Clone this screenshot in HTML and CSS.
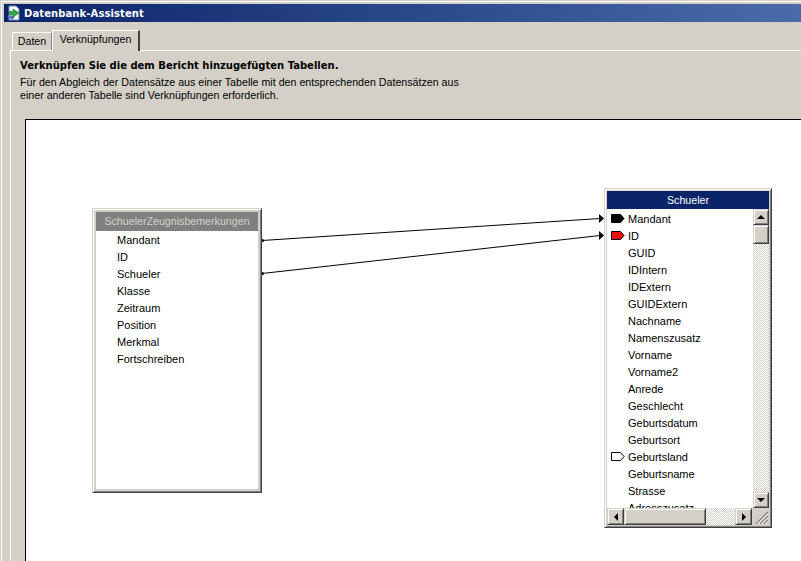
FILE: index.html
```html
<!DOCTYPE html>
<html>
    <head>
        <meta charset="utf-8">
        <title>Datenbank-Assistent</title>
        <link rel="stylesheet" href="styles.css">
    </head>
    <body>
        <div class="window">
            <div class="titlebar">
                <svg class="appicon" width="16" height="18" viewBox="0 0 16 18">
                    <path d="M3 2h7l3 3v11H3z" fill="#f4f6fa" stroke="#7f8fb0"/>
                    <path d="M1 13l5 3 3-3-4-2z" fill="#5b78b8"/>
                    <path d="M7 5l6 4-6 4v-2.500H3v-3h4z" fill="#2fa84a" stroke="#14702c" stroke-width=".6"/>
                </svg>
                <span>Datenbank-Assistent</span>
            </div>
            <div class="tabs">
                <div class="tab">Daten</div>
                <div class="tab active">Verknüpfungen</div>
            </div>
            <div class="panel">
                <div class="intro">
                    <h1>Verknüpfen Sie die dem Bericht hinzugefügten Tabellen.</h1>
                    <p>Für den Abgleich der Datensätze aus einer Tabelle mit den entsprechenden Datensätzen aus<br>einer anderen Tabelle sind Verknüpfungen erforderlich.</p>
                </div>
                <div class="canvas">
                    <svg class="links" width="776" height="441" viewBox="0 0 776 441">
                        <path d="M236 120.500L574 98.500M236 153.500L574 115.500" stroke="#000" fill="none"/>
                        <path d="M573 94l5 4.500-5 4.500zM573 111l5 4.500-5 4.500z" fill="#000"/>
                        <circle cx="236.500" cy="120.500" r="1.500" fill="#000"/>
                        <circle cx="236.500" cy="153.500" r="1.500" fill="#000"/>
                    </svg>

                    <div class="dbtable left-table">
                        <div class="dbhead inactive">SchuelerZeugnisbemerkungen</div>
                        <div class="fields plain">
                            <div class="field">Mandant</div>
                            <div class="field">ID</div>
                            <div class="field">Schueler</div>
                            <div class="field">Klasse</div>
                            <div class="field">Zeitraum</div>
                            <div class="field">Position</div>
                            <div class="field">Merkmal</div>
                            <div class="field">Fortschreiben</div>
                        </div>
                    </div>

                    <div class="dbtable right-table">
                        <div class="dbhead">Schueler</div>
                        <div class="listarea">
                            <div class="fields keyed">
                                <div class="field"><svg class="key" width="15" height="11" viewBox="0 0 15 11"><path d="M1.500 1.500h9l3.500 4-3.500 4h-9z" fill="#000" stroke="#000"/></svg>Mandant</div>
                                <div class="field"><svg class="key" width="15" height="11" viewBox="0 0 15 11"><path d="M1.500 1.500h9l3.500 4-3.500 4h-9z" fill="#f00f0f" stroke="#000"/></svg>ID</div>
                                <div class="field">GUID</div>
                                <div class="field">IDIntern</div>
                                <div class="field">IDExtern</div>
                                <div class="field">GUIDExtern</div>
                                <div class="field">Nachname</div>
                                <div class="field">Namenszusatz</div>
                                <div class="field">Vorname</div>
                                <div class="field">Vorname2</div>
                                <div class="field">Anrede</div>
                                <div class="field">Geschlecht</div>
                                <div class="field">Geburtsdatum</div>
                                <div class="field">Geburtsort</div>
                                <div class="field"><svg class="key" width="15" height="11" viewBox="0 0 15 11"><path d="M1.500 1.500h9l3.500 4-3.500 4h-9z" fill="#fff" stroke="#000"/></svg>Geburtsland</div>
                                <div class="field">Geburtsname</div>
                                <div class="field">Strasse</div>
                                <div class="field">Adresszusatz</div>
                            </div>
                            <div class="vscroll">
                                <div class="btn"><i class="arrow up"></i></div>
                                <div class="thumb vthumb"></div>
                                <div class="track"></div>
                                <div class="btn"><i class="arrow down"></i></div>
                            </div>
                        </div>
                        <div class="hrow">
                            <div class="hscroll">
                                <div class="btn"><i class="arrow lft"></i></div>
                                <div class="thumb hthumb"></div>
                                <div class="track"></div>
                                <div class="btn"><i class="arrow rgt"></i></div>
                            </div>
                            <svg class="grip" width="17" height="17" viewBox="0 0 17 17">
                                <path d="M16 4L4 16M16 8L8 16M16 12L12 16" stroke="#808080" stroke-width="1.500"/>
                                <path d="M16 5.500L5.500 16M16 9.500L9.500 16M16 13.500L13.500 16" stroke="#fff"/>
                            </svg>
                        </div>
                    </div>
                </div>
            </div>
        </div>
    </body>
</html>
```

FILE: styles.css
```css
html, body {
    margin: 0;
    height: 561px;
    overflow: hidden;
    background: #d4d0c8;
}

body {
    font-family: "Liberation Sans", Arial, sans-serif;
    font-size: 11px;
    color: #000;
}

.window {
    margin: 1px 0 0 1px;
    padding: 2px 0 0 2px;
    height: 557px;
    border-top: solid 1px #fff;
    border-left: solid 1px #fff;
}

.titlebar {
    display: flex;
    align-items: center;
    height: 18px;
    padding-left: 2px;
    gap: 2px;
    color: #fff;
    font-family: "DejaVu Sans", sans-serif;
    font-size: 10px;
    letter-spacing: .1px;
    font-weight: bold;
    background: linear-gradient(to right, #0a246a, #4a6ba8);
}

.tabs {
    display: flex;
    align-items: flex-end;
    height: 28px;
    margin-left: 8px;
}

.tab {
    height: 18px;
    width: 40px;
    box-sizing: border-box;
    padding-top: 2px;
    text-align: center;
    font-size: 10.66px;
    border-top: solid 1px #fff;
    border-left: solid 1px #fff;
    border-right: solid 1px #808080;
}

.tab.active {
    position: relative;
    z-index: 1;
    height: 21px;
    width: 88px;
    margin-bottom: -1px;
    background: #d4d0c8;
    border-right: solid 2px #404040;
}

.panel {
    margin-left: 6px;
    height: 510px;
    border-top: solid 1px #fff;
    border-left: solid 1px #fff;
}

.intro {
    margin-left: 9px;
    height: 68px;
    padding-top: 8px;
    box-sizing: border-box;
}

.intro h1 {
    margin: 0 0 3px 0;
    font-family: "DejaVu Sans", sans-serif;
    font-size: 10px;
    line-height: 14px;
}

.intro p {
    margin: 0;
    font-size: 10.66px;
    line-height: 13px;
}

.canvas {
    position: relative;
    margin-left: 14px;
    height: 460px;
    background: #fff;
    border-top: solid 1px #000;
    border-left: solid 1px #000;
}

.links {
    position: absolute;
    left: 0;
    top: 0;
}

.dbtable {
    position: absolute;
    display: flex;
    flex-direction: column;
    box-sizing: border-box;
    padding: 2px;
    background: #d4d0c8;
    border: solid 1px;
    border-color: #d4d0c8 #404040 #404040 #d4d0c8;
    box-shadow: inset 1px 1px #fff, inset -1px -1px #808080;
}

.left-table {
    left: 66px;
    top: 88px;
    width: 170px;
    height: 285px;
    padding: 3px;
}

.right-table {
    left: 578px;
    top: 68px;
    width: 168px;
    height: 340px;
}

.dbhead {
    flex: none;
    height: 18px;
    line-height: 18px;
    text-align: center;
    color: #fff;
    font-size: 10.66px;
    background: #0a246a;
}

.dbhead.inactive {
    height: 19px;
    line-height: 19px;
    color: #d4d0c8;
    background: #808080;
}

.fields {
    flex: 1;
    min-height: 0;
    overflow: hidden;
    background: #fff;
    padding-top: 1px;
}

.fields.keyed {
    padding-top: 2px;
}

.field {
    position: relative;
    height: 17px;
    line-height: 17px;
    padding-left: 21px;
    white-space: nowrap;
    font-size: 11px;
}

.key {
    position: absolute;
    left: 3px;
    top: 2px;
}

.listarea {
    flex: 1;
    min-height: 0;
    display: flex;
}

.vscroll {
    flex: none;
    width: 16px;
    display: flex;
    flex-direction: column;
}

.hrow {
    flex: none;
    height: 17px;
    display: flex;
}

.hscroll {
    flex: 1;
    display: flex;
}

.btn, .thumb {
    flex: none;
    box-sizing: border-box;
    display: flex;
    align-items: center;
    justify-content: center;
    background: #d4d0c8;
    border: solid 1px;
    border-color: #d4d0c8 #404040 #404040 #d4d0c8;
    box-shadow: inset 1px 1px #fff, inset -1px -1px #808080;
}

.vscroll .btn {
    height: 16px;
}

.hscroll .btn {
    width: 17px;
}

.vthumb {
    height: 19px;
}

.hthumb {
    width: 82px;
}

.track {
    flex: 1;
    background: repeating-conic-gradient(#d4d0c8 0 25%, #fff 0 50%) 0 0 / 2px 2px;
}

.arrow {
    width: 0;
    height: 0;
    border: solid 4px transparent;
}

.arrow.up {
    border-top: 0;
    border-bottom-color: #000;
}

.arrow.down {
    border-bottom: 0;
    border-top-color: #000;
}

.arrow.lft {
    border-left: 0;
    border-right-color: #000;
}

.arrow.rgt {
    border-right: 0;
    border-left-color: #000;
}

.grip {
    flex: none;
}
```
